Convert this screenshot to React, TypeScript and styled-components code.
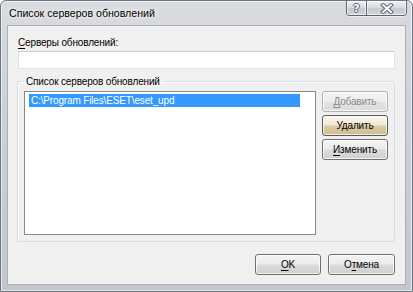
import React from "react";
import styled, { createGlobalStyle } from "styled-components";

const Global = createGlobalStyle`
  html, body { margin: 0; padding: 0; background: #ffffff; }
  body { font-family: "Liberation Sans", Arial, sans-serif; font-size: 10px; }
  * { box-sizing: border-box; }
`;

const Window = styled.div`
  width: 413px;
  height: 292px;
  display: flex;
  flex-direction: column;
  border: 1px solid #6d7781;
  border-radius: 6px 6px 0 0;
  background: linear-gradient(180deg, #d9dbde 0%, #cdd0d4 40%, #c3c7cb 100%);
  box-shadow: inset 0 0 0 1px rgba(255,255,255,0.55);
  overflow: hidden;
`;

const TitleBar = styled.div`
  height: 24px;
  display: flex;
  align-items: flex-start;
  justify-content: space-between;
  padding: 0 5px 0 8px;
`;

const TitleText = styled.div`
  font-family: "Liberation Sans", Arial, sans-serif;
  font-size: 10.6px;
  line-height: 15px;
  color: #000;
  padding-top: 5px;
  text-shadow: 0 0 6px rgba(255,255,255,0.9), 0 0 3px rgba(255,255,255,0.9);
`;

const CaptionGroup = styled.div`
  display: flex;
  height: 15px;
  border: 1px solid #5b6670;
  border-top: none;
  border-radius: 0 0 4px 4px;
  overflow: hidden;
  box-shadow: 0 1px 0 rgba(255,255,255,0.6);
`;

const CaptionButton = styled.div<{ $w: number; $divider?: boolean }>`
  width: ${(p) => p.$w}px;
  height: 100%;
  display: flex;
  align-items: center;
  justify-content: center;
  background: linear-gradient(180deg, #eef0f2 0%, #dadde0 45%, #c6cace 55%, #d2d5d8 100%);
  box-shadow: inset 0 0 0 1px rgba(255,255,255,0.6);
  border-left: ${(p) => (p.$divider ? "1px solid #5b6670" : "none")};
`;

const HelpGlyph = styled.span`
  font-family: "DejaVu Sans", "Liberation Sans", sans-serif;
  font-weight: bold;
  font-size: 11px;
  line-height: 11px;
  color: #ffffff;
  text-shadow: 1px 0 0 #596370, -1px 0 0 #596370, 0 1px 0 #596370, 0 -1px 0 #596370;
`;

const Client = styled.div`
  flex: 1;
  margin: 0 6px 6px 6px;
  border: 1px solid #a7b0b8;
  background: #f0f0f0;
  display: flex;
  flex-direction: column;
  padding: 9px 10px 9px 9px;
`;

const FieldLabel = styled.div`
  font-size: 10px;
  letter-spacing: -0.15px;
  line-height: 15px;
  color: #000;
  margin-left: 1px;
`;

const U = styled.span`
  text-decoration: underline;
  text-underline-offset: 2px;
`;

const TextInput = styled.div`
  height: 18px;
  margin: 1px 0 0 1px;
  background: #ffffff;
  border: 1px solid #dfe3e8;
  border-top-color: #c9ced4;
  border-radius: 1px;
`;

const Group = styled.fieldset`
  margin: 5px 0 0 0;
  padding: 2px 6px 6px 6px;
  border: 1px solid #d5dfe5;
  border-radius: 3px;
  box-shadow: inset 1px 1px 0 #ffffff;
  min-width: 0;
`;

const Legend = styled.legend`
  font-size: 10px;
  letter-spacing: -0.15px;
  line-height: 15px;
  padding: 0 2px;
  margin-left: 0;
  color: #000;
`;

const GroupBody = styled.div`
  display: flex;
  gap: 6px;
`;

const ListBox = styled.div`
  width: 293px;
  height: 144px;
  background: #ffffff;
  border: 1px solid #828790;
  padding: 2px 0 0 4px;
`;

const ListItem = styled.div<{ $selected?: boolean }>`
  width: 271px;
  height: 13px;
  font-size: 10px;
  letter-spacing: -0.15px;
  line-height: 13px;
  padding-left: 2px;
  white-space: nowrap;
  color: ${(p) => (p.$selected ? "#ffffff" : "#000000")};
  background: ${(p) => (p.$selected ? "#3399ff" : "transparent")};
`;

const ButtonColumn = styled.div`
  display: flex;
  flex-direction: column;
  gap: 3px;
`;

const Button = styled.div<{ $w?: number; $variant?: "normal" | "disabled" | "hot" }>`
  width: ${(p) => p.$w ?? 66}px;
  height: 21px;
  display: flex;
  align-items: center;
  justify-content: center;
  font-size: 10px;
  letter-spacing: -0.15px;
  border-radius: 3px;
  border: 1px solid
    ${(p) => (p.$variant === "disabled" ? "#adb2b5" : p.$variant === "hot" ? "#5a5a52" : "#707070")};
  color: ${(p) => (p.$variant === "disabled" ? "#8a8a8a" : "#000")};
  background: ${(p) =>
    p.$variant === "disabled"
      ? "linear-gradient(180deg, #f4f4f4 0%, #ececec 50%, #e2e2e2 51%, #dcdcdc 100%)"
      : p.$variant === "hot"
      ? "linear-gradient(180deg, #fbf8f1 0%, #f1e9d8 45%, #ddcba6 55%, #cfbb90 100%)"
      : "linear-gradient(180deg, #f4f4f4 0%, #ebebeb 48%, #dcdcdc 52%, #cfcfcf 100%)"};
  box-shadow: inset 0 0 0 1px rgba(255, 255, 255, 0.75);
`;

const Footer = styled.div`
  margin-top: auto;
  display: flex;
  justify-content: flex-end;
  gap: 7px;
`;

export default function App() {
  return (
    <>
      <Global />
      <Window>
        <TitleBar>
          <TitleText>Список серверов обновлений</TitleText>
          <CaptionGroup>
            <CaptionButton $w={19}>
              <HelpGlyph>?</HelpGlyph>
            </CaptionButton>
            <CaptionButton $w={40} $divider>
              <svg width="14" height="11" viewBox="0 0 14 11">
                <path d="M3 2 L11 9 M11 2 L3 9" stroke="#5b6670" strokeWidth="4" strokeLinecap="square" />
                <path d="M3 2 L11 9 M11 2 L3 9" stroke="#ffffff" strokeWidth="2" strokeLinecap="square" />
              </svg>
            </CaptionButton>
          </CaptionGroup>
        </TitleBar>
        <Client>
          <FieldLabel>
            <U>С</U>ерверы обновлений:
          </FieldLabel>
          <TextInput />
          <Group>
            <Legend>Список серверов обновлений</Legend>
            <GroupBody>
              <ListBox>
                <ListItem $selected>C:\Program Files\ESET\eset_upd</ListItem>
              </ListBox>
              <ButtonColumn>
                <Button $variant="disabled">
                  <U>Д</U>обавить
                </Button>
                <Button $variant="hot">Удалить</Button>
                <Button>
                  <U>И</U>зменить
                </Button>
              </ButtonColumn>
            </GroupBody>
          </Group>
          <Footer>
            <Button>
              <U>O</U>K
            </Button>
            <Button $w={67}>
              О<U>т</U>мена
            </Button>
          </Footer>
        </Client>
      </Window>
    </>
  );
}
